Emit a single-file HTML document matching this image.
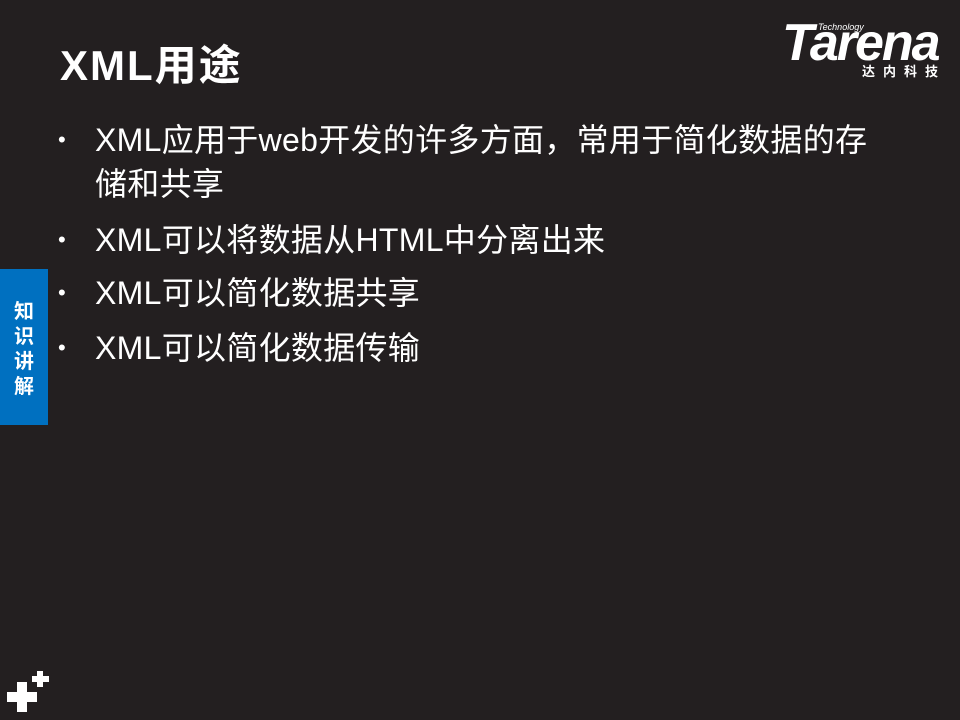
<!DOCTYPE html>
<html><head><meta charset="utf-8"><style>
body{margin:0;width:960px;height:720px;background:#231f20;position:relative;overflow:hidden;font-family:"Liberation Sans","Noto Sans CJK SC",sans-serif;color:#fff}
.a{position:absolute;white-space:nowrap}
.t{left:60px;top:37px;font-size:42px;font-weight:bold;line-height:58px;letter-spacing:2px}
.l{left:95px;font-size:32px;line-height:44px;letter-spacing:0.3px}
.b{left:58px;font-size:22px;line-height:44px}
.tab{position:absolute;left:0;top:269px;width:48px;height:156px;background:#0070c0}
.tab div{position:absolute;left:12px;top:28px;width:24px;font-size:20px;font-weight:bold;line-height:25px;text-align:center;font-family:"Noto Sans CJK SC",sans-serif}
.p{position:absolute;background:#fff}
</style></head><body>
<div class="a t">XML用途</div>
<div class="a b" style="top:118px">•</div>
<div class="a l" style="top:118px">XML应用于web开发的许多方面，常用于简化数据的存</div>
<div class="a l" style="top:162px">储和共享</div>
<div class="a b" style="top:218px">•</div>
<div class="a l" style="top:218px">XML可以将数据从HTML中分离出来</div>
<div class="a b" style="top:271px">•</div>
<div class="a l" style="top:271px">XML可以简化数据共享</div>
<div class="a b" style="top:326px">•</div>
<div class="a l" style="top:326px">XML可以简化数据传输</div>
<div class="tab"><div>知识讲解</div></div>
<div class="a" style="left:782px;top:16px;font-size:52px;font-weight:bold;font-style:italic;letter-spacing:-2px;line-height:54px">Tarena</div>
<div class="a" style="left:818px;top:22px;font-size:9px;line-height:10px;font-style:italic">Technology</div>
<div class="a" style="left:862px;top:63px;font-size:13px;font-weight:bold;letter-spacing:8px;line-height:16px;font-family:'Noto Sans CJK SC',sans-serif">达内科技</div>
<div class="p" style="left:7px;top:692px;width:30px;height:10px"></div>
<div class="p" style="left:17px;top:682px;width:10px;height:30px"></div>
<div class="p" style="left:32px;top:676px;width:17px;height:6px"></div>
<div class="p" style="left:37px;top:671px;width:6px;height:16px"></div>
</body></html>
